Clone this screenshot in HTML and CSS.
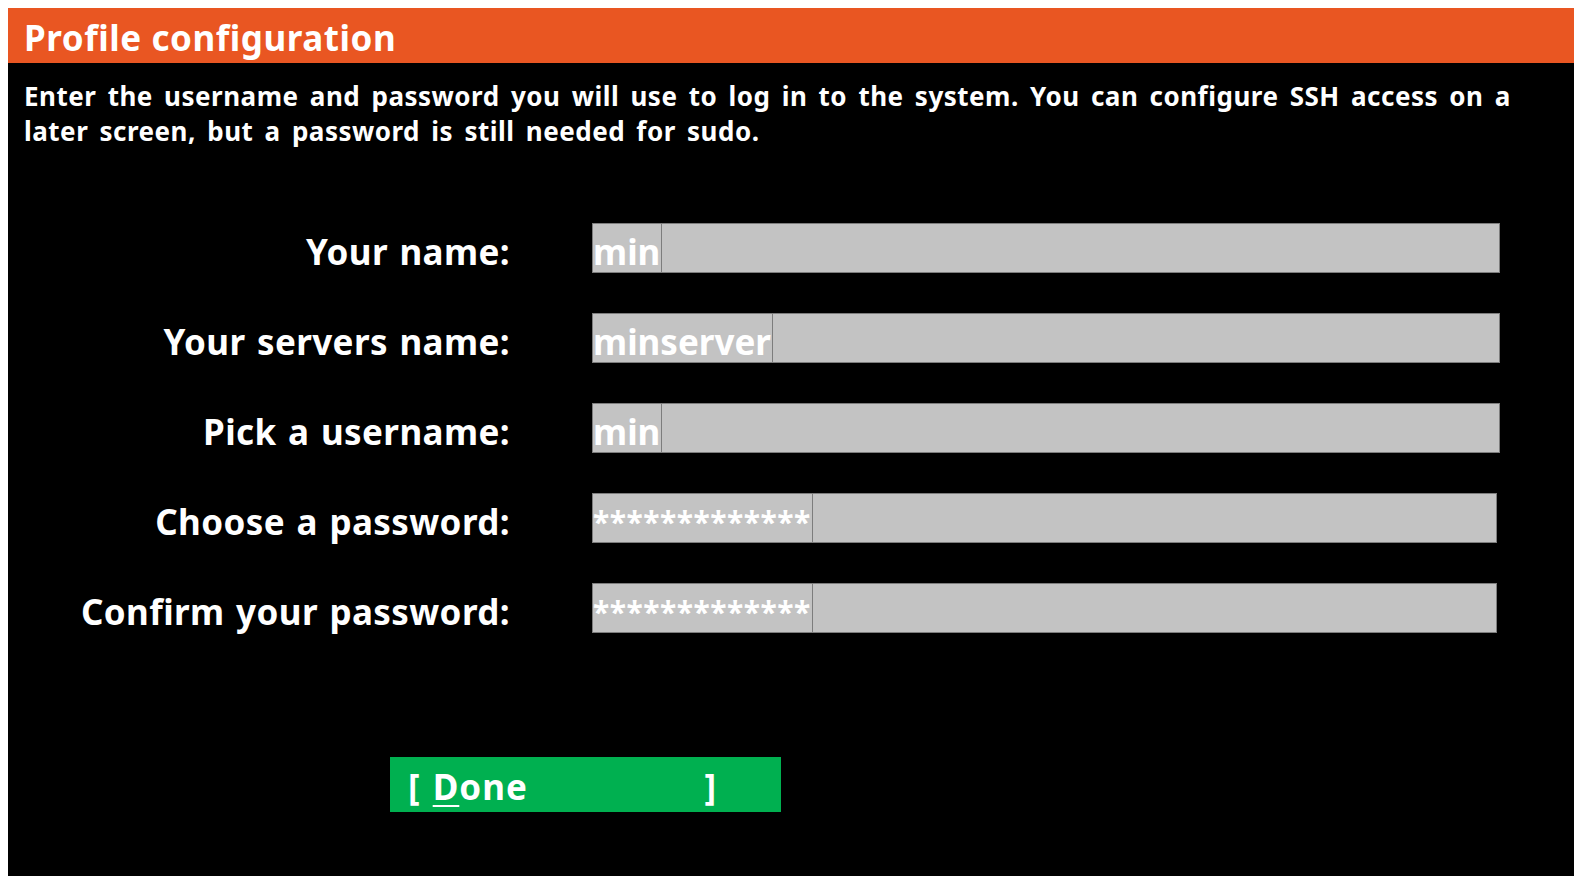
FILE: index.html
```html
<!DOCTYPE html>
<html lang="en">
<head>
<meta charset="utf-8">
<title>Profile configuration</title>
<link rel="stylesheet" href="styles.css">
</head>
<body>
<div class="screen">
  <header class="title-bar"><h1 class="title">Profile configuration</h1></header>
  <p class="intro">Enter the username and password you will use to log in to the system. You can configure SSH access on a later screen, but a password is still needed for sudo.</p>
  <form class="form">
    <label class="label">Your name:</label>
    <div class="field"><span class="value">min</span></div>
    <label class="label">Your servers name:</label>
    <div class="field"><span class="value">minserver</span></div>
    <label class="label">Pick a username:</label>
    <div class="field"><span class="value">min</span></div>
    <label class="label">Choose a password:</label>
    <div class="field field-short"><span class="value value-secret">*************</span></div>
    <label class="label">Confirm your password:</label>
    <div class="field field-short"><span class="value value-secret">*************</span></div>
  </form>
  <div class="actions">
    <div class="button"><span class="btn-text">[ <u>D</u>one</span><span class="bracket-end">]</span></div>
  </div>
</div>
</body>
</html>
```

FILE: styles.css
```css
html, body {
  height: 100%;
}
body {
  margin: 8px 0 0 8px;
  background: #ffffff;
  font-family: "Noto Sans", "Open Sans", "DejaVu Sans", sans-serif;
  color: #ffffff;
}
.screen {
  background: #000000;
  min-height: calc(100vh - 8px);
  display: flex;
  flex-direction: column;
}
.title-bar {
  background: #e95622;
  height: 55px;
  box-sizing: border-box;
  display: flex;
  align-items: center;
  padding: 4px 0 0 16px;
}
.title {
  margin: 0;
  font-size: 35px;
  font-weight: 700;
  line-height: 1;
  letter-spacing: 0.55px;
}
.intro {
  margin: 16px 0 0 0;
  padding: 0 40px 0 16px;
  font-size: 26px;
  font-weight: 700;
  line-height: 35px;
  letter-spacing: 0.5px;
  word-spacing: 4px;
}
.form {
  margin-top: 74px;
  display: grid;
  grid-template-columns: 502px 908px;
  column-gap: 82px;
  row-gap: 40px;
  grid-auto-rows: 50px;
  align-items: center;
}
.label {
  text-align: right;
  font-size: 35px;
  font-weight: 700;
  line-height: 40px;
  padding-top: 8px;
  letter-spacing: 0.4px;
  word-spacing: 2px;
}
.field {
  height: 50px;
  box-sizing: border-box;
  background: #c3c3c3;
  border: 1px solid #7d7d7d;
  display: flex;
}
.field-short {
  width: 905px;
}
.value {
  border-right: 1px solid #7d7d7d;
  font-size: 35px;
  font-weight: 700;
  line-height: 40px;
  padding: 8px 1px 0 0;
  color: #ffffff;
}
.value-secret {
  font-size: 30px;
  letter-spacing: 0.5px;
}
.actions {
  margin-top: 124px;
  padding-left: 382px;
}
.button {
  width: 391px;
  height: 55px;
  background: #00b050;
  box-sizing: border-box;
  padding: 4px 0 0 18px;
  display: flex;
  align-items: center;
  font-size: 35px;
  font-weight: 700;
  white-space: pre;
}
.btn-text {
  letter-spacing: 1px;
  word-spacing: 2px;
}
.btn-text u {
  text-decoration-thickness: 2px;
  text-underline-offset: 5px;
}
.bracket-end {
  margin-left: auto;
  margin-right: 65px;
}
```
